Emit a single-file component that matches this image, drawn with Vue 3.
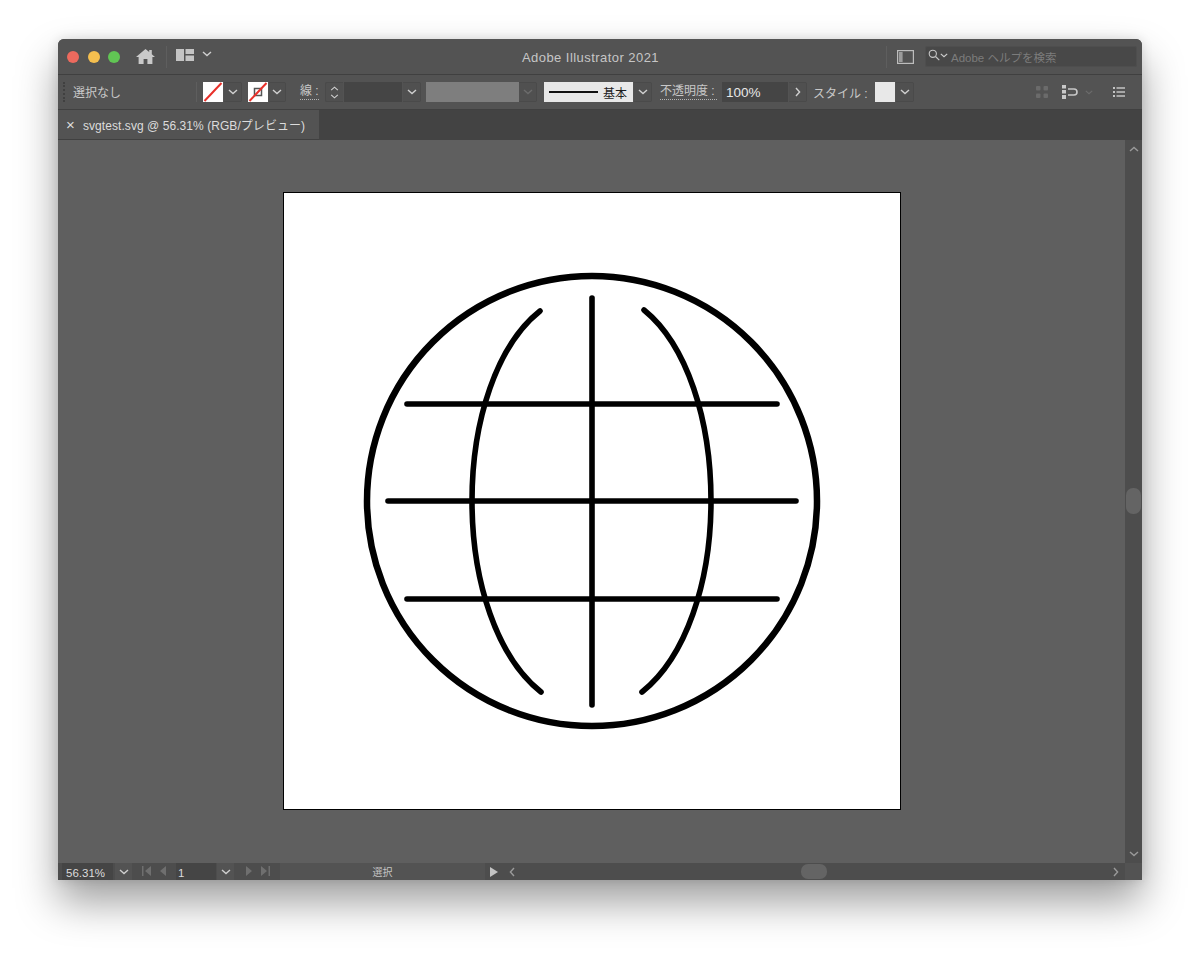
<script setup>
const swatches = [{ id: 'fill' }, { id: 'stroke' }]
</script>

<template>
  <div class="page">
    <svg class="defs" width="0" height="0" aria-hidden="true">
      <symbol id="chev" viewBox="0 0 10 6">
        <path d="M1 1l4 3.6L9 1" fill="none" stroke="currentColor" stroke-width="1.4" />
      </symbol>
    </svg>

    <div class="window">
      <!-- title bar -->
      <header class="titlebar">
        <div class="title-left">
          <span class="light red"></span>
          <span class="light yellow"></span>
          <span class="light green"></span>
          <svg class="home" viewBox="0 0 19 15">
            <path d="M9.5 0L0 8h2.6v7h5V10h3.8v5h5V8H19l-3.2-2.7V1h-2.6v2.1z" fill="#c9c9c9" />
          </svg>
          <span class="vsep"></span>
          <svg class="layout" viewBox="0 0 18 12">
            <path d="M0 0h8v12H0zM9.5 0H18v5H9.5zM9.5 6.5H18V12H9.5z" fill="#c4c4c4" />
          </svg>
          <svg class="chev chev-layout"><use href="#chev" /></svg>
        </div>
        <div class="app-title">Adobe Illustrator 2021</div>
        <div class="title-right">
          <span class="vsep"></span>
          <svg class="panel-icon" viewBox="0 0 17 14">
            <rect x=".6" y=".6" width="15.8" height="12.8" fill="none" stroke="#bdbdbd" stroke-width="1.2" />
            <rect x="2" y="2" width="3.6" height="10" fill="#9c9c9c" />
          </svg>
          <div class="search">
            <svg class="search-icon" viewBox="0 0 12 12">
              <circle cx="4.8" cy="4.8" r="3.6" fill="none" stroke="#c8c8c8" stroke-width="1.1" />
              <path d="M7.5 7.5l3.8 3.6" stroke="#c8c8c8" stroke-width="1.2" />
            </svg>
            <svg class="chev chev-search"><use href="#chev" /></svg>
            <span class="search-text">Adobe ヘルプを検索</span>
          </div>
        </div>
      </header>

      <!-- control bar -->
      <div class="toolbar">
        <span class="grip"></span>
        <span class="selection">選択なし</span>
        <span class="vsep tool-sep"></span>

        <div v-for="(s, i) in swatches" :key="s.id" class="combo" :class="'combo-' + s.id">
          <svg class="swatch" viewBox="0 0 20 20">
            <rect width="20" height="20" fill="#fff" />
            <rect v-if="i === 1" x="6.500" y="6.500" width="7" height="7" fill="none" stroke="#555" stroke-width="1.500" />
            <path d="M1.500 19L18.500 1" stroke="#e8302a" stroke-width="2" />
          </svg>
          <span class="combo-btn"><svg class="chev"><use href="#chev" /></svg></span>
        </div>

        <span class="label label-stroke">線 :</span>
        <div class="combo combo-weight">
          <span class="stepper">
            <svg class="step up"><use href="#chev" /></svg>
            <svg class="step"><use href="#chev" /></svg>
          </span>
          <span class="field field-weight"></span>
          <span class="combo-btn"><svg class="chev"><use href="#chev" /></svg></span>
        </div>

        <div class="combo combo-gray">
          <span class="gray-box"></span>
          <span class="combo-btn dim"><svg class="chev"><use href="#chev" /></svg></span>
        </div>

        <div class="combo combo-basic">
          <span class="basic-box"><i class="basic-line"></i>基本</span>
          <span class="combo-btn"><svg class="chev"><use href="#chev" /></svg></span>
        </div>

        <span class="label label-opacity">不透明度 :</span>
        <div class="combo combo-opacity">
          <span class="field field-opacity">100%</span>
          <span class="combo-btn">
            <svg class="chev chev-right"><use href="#chev" /></svg>
          </span>
        </div>

        <span class="label-plain">スタイル :</span>
        <div class="combo combo-style">
          <span class="style-box"></span>
          <span class="combo-btn"><svg class="chev"><use href="#chev" /></svg></span>
        </div>

        <div class="tool-right">
          <svg class="grid-icon" viewBox="0 0 12 12">
            <rect width="4.500" height="4.500" rx="1" fill="#6b6b6b" />
            <rect x="7.500" width="4.500" height="4.500" rx="1" fill="#6b6b6b" />
            <rect y="7.500" width="4.500" height="4.500" rx="1" fill="#6b6b6b" />
            <rect x="7.500" y="7.500" width="4.500" height="4.500" rx="1" fill="#6b6b6b" />
          </svg>
          <svg class="align-icon" viewBox="0 0 17 14">
            <path d="M0 0h4v3.500H0zM0 5h4v3.500H0zM0 10h4v4H0z" fill="#c8c8c8" />
            <path d="M6 4h6a3 3 0 0 1 0 6H6" fill="none" stroke="#c8c8c8" stroke-width="1.6" />
          </svg>
          <svg class="chev chev-align"><use href="#chev" /></svg>
          <svg class="list-icon" viewBox="0 0 12 10">
            <path d="M0 0h2v2H0zM0 4h2v2H0zM0 8h2v2H0zM3.500 .3H12v1.400H3.500zM3.500 4.300H12v1.400H3.500zM3.500 8.300H12v1.400H3.500z" fill="#c4c4c4" />
          </svg>
        </div>
      </div>

      <!-- document tabs -->
      <div class="tabbar">
        <div class="tab">
          <span class="tab-close">×</span>
          <span class="tab-name">svgtest.svg @ 56.31% (RGB/プレビュー)</span>
        </div>
      </div>

      <!-- canvas + vertical scroll -->
      <div class="workspace">
        <div class="canvas">
          <div class="artboard">
            <svg class="globe" viewBox="283 192 618 618">
              <circle cx="592" cy="501" r="225" fill="none" stroke="#000" stroke-width="6.500" />
              <g fill="none" stroke="#000" stroke-width="5.600" stroke-linecap="round">
                <path d="M592 298V705" />
                <path d="M407 404H777" />
                <path d="M388 501H796" />
                <path d="M407 599H777" />
                <path d="M540 311C497 345 472 420 472 501C472 582 497 657 541 692" />
                <path d="M644 310C687 345 711 420 711 501C711 582 686 657 642 692" />
              </g>
            </svg>
          </div>
        </div>
        <div class="vscroll">
          <svg class="chev sb-up"><use href="#chev" /></svg>
          <span class="vthumb"></span>
          <svg class="chev sb-down"><use href="#chev" /></svg>
        </div>
      </div>

      <!-- status bar -->
      <footer class="statusbar">
        <span class="st-field st-zoom">56.31%</span>
        <span class="st-btn"><svg class="chev"><use href="#chev" /></svg></span>
        <svg class="nav nav-prev" viewBox="0 0 30 10">
          <path d="M2 0h1.500v10H2zM11 0v10L5 5zM26 0v10L20 5z" fill="#6f6f6f" />
        </svg>
        <span class="st-field st-page">1</span>
        <span class="st-btn st-btn-page"><svg class="chev"><use href="#chev" /></svg></span>
        <svg class="nav nav-next" viewBox="0 0 30 10">
          <path d="M4 0v10l6-5zM19 0v10l6-5zM26.500 0H28v10h-1.500z" fill="#6f6f6f" />
        </svg>
        <span class="st-label">選択</span>
        <svg class="play" viewBox="0 0 8 10"><path d="M0 0v10l8-5z" fill="#c4c4c4" /></svg>
        <div class="hscroll">
          <svg class="chev chev-left"><use href="#chev" /></svg>
          <span class="hthumb"></span>
          <svg class="chev chev-right hs-right"><use href="#chev" /></svg>
        </div>
        <span class="corner"></span>
      </footer>
    </div>
  </div>
</template>

<style>
html,
body {
  margin: 0;
  background: #fff;
}
</style>

<style scoped>
.page {
  height: 956px;
  box-sizing: border-box;
  padding: 39px 58px 0;
  overflow: hidden;
  background: #fff;
  font-family: "Liberation Sans", "Noto Sans CJK JP", sans-serif;
}
.defs {
  position: absolute;
}
.window {
  height: 841px;
  display: flex;
  flex-direction: column;
  border-radius: 6px 6px 0 0;
  overflow: hidden;
  background: #535353;
  box-shadow: 0 22px 42px rgba(0, 0, 0, 0.38), 0 0 12px rgba(0, 0, 0, 0.12);
}
.chev {
  width: 10px;
  height: 6px;
  color: #cfcfcf;
  display: block;
  flex: none;
}

/* title bar */
.titlebar {
  height: 35px;
  flex: none;
  display: flex;
  align-items: center;
  background: #535353;
  border-bottom: 1px solid #404040;
}
.title-left {
  width: 237px;
  flex: none;
  display: flex;
  align-items: center;
  padding-left: 9px;
  box-sizing: border-box;
}
.light {
  width: 12px;
  height: 12px;
  border-radius: 50%;
  margin-right: 8.500px;
  flex: none;
}
.red {
  background: #ed6a5e;
}
.yellow {
  background: #f5bf4f;
}
.green {
  background: #61c554;
}
.home {
  width: 19px;
  height: 15px;
  margin-left: 7px;
}
.vsep {
  width: 1px;
  height: 22px;
  background: #5e5e5e;
  flex: none;
}
.title-left .vsep {
  margin-left: 11px;
}
.layout {
  width: 18px;
  height: 12px;
  margin-left: 9px;
  margin-top: -3px;
}
.chev-layout {
  margin-left: 8px;
  margin-top: -6px;
}
.app-title {
  flex: 1;
  text-align: center;
  padding-top: 1px;
  font-size: 13px;
  letter-spacing: 0.45px;
  color: #c6c6c6;
}
.title-right {
  width: 256px;
  flex: none;
  display: flex;
  align-items: center;
}
.panel-icon {
  width: 17px;
  height: 14px;
  margin-left: 10px;
}
.search {
  width: 212px;
  height: 21px;
  margin-left: 11px;
  display: flex;
  align-items: center;
  background: #484848;
  border: 1px solid #4e4e4e;
  border-radius: 2px;
  box-sizing: border-box;
}
.search-icon {
  width: 12px;
  height: 12px;
  margin-left: 2px;
  margin-top: -3px;
}
.chev-search {
  width: 8px;
  height: 5px;
  margin-top: -3px;
}
.search-text {
  margin-left: 3px;
  padding-top: 1px;
  font-size: 11.500px;
  color: #7c7c7c;
  white-space: nowrap;
}

/* control bar */
.toolbar {
  height: 34px;
  flex: none;
  display: flex;
  align-items: center;
  background: #535353;
  border-bottom: 1px solid #404040;
  font-size: 12px;
  color: #c8c8c8;
}
.grip {
  width: 0;
  height: 20px;
  margin-left: 5px;
  border-left: 2px dotted #404040;
}
.selection {
  margin-left: 8px;
  width: 48px;
  margin-top: -2px;
  white-space: nowrap;
}
.tool-sep {
  height: 20px;
  margin-left: 75px;
}
.combo {
  display: flex;
  height: 20px;
  align-items: stretch;
  flex: none;
}
.combo-btn {
  display: flex;
  align-items: center;
  justify-content: center;
  width: 18px;
  margin-left: 1px;
  background: #505050;
  border: 1px solid #4a4a4a;
  border-left: 0;
  border-radius: 0 2px 2px 0;
  box-sizing: border-box;
  flex: none;
}
.combo-btn.dim {
  background: #505050;
}
.combo-btn.dim .chev {
  color: #6c6c6c;
}
.swatch {
  width: 20px;
  height: 20px;
  display: block;
}
.combo-fill {
  margin-left: 6px;
}
.combo-stroke {
  margin-left: 6px;
}
.combo-stroke .combo-btn {
  width: 17px;
}
.label {
  border-bottom: 1px dotted #b5b5b5;
  line-height: 15px;
  white-space: nowrap;
  flex: none;
}
.label-stroke {
  margin-left: 14px;
  width: 19px;
}
.combo-weight {
  margin-left: 6px;
}
.stepper {
  width: 18px;
  display: flex;
  flex-direction: column;
  align-items: center;
  justify-content: center;
  gap: 3px;
  background: #505050;
  border: 1px solid #4a4a4a;
  border-right: 0;
  border-radius: 2px 0 0 2px;
  box-sizing: border-box;
}
.step {
  width: 9px;
  height: 5px;
  color: #cfcfcf;
  display: block;
}
.step.up {
  transform: rotate(180deg);
}
.field {
  background: #454545;
  color: #e8e8e8;
}
.field-weight {
  width: 58px;
  margin-left: 1px;
}
.combo-gray {
  margin-left: 5px;
}
.gray-box {
  width: 93px;
  background: #7e7e7e;
}
.combo-gray .combo-btn {
  margin-left: 0;
}
.combo-basic {
  margin-left: 7px;
}
.basic-box {
  width: 89px;
  box-sizing: border-box;
  padding-left: 5px;
  background: #e8e8e8;
  color: #1c1c1c;
  display: flex;
  align-items: center;
  gap: 5px;
  white-space: nowrap;
}
.basic-line {
  width: 49px;
  height: 2px;
  background: #111;
  flex: none;
}
.label-opacity {
  margin-left: 8px;
  width: 57px;
}
.combo-opacity {
  margin-left: 5px;
}
.field-opacity {
  width: 66px;
  box-sizing: border-box;
  padding-left: 4px;
  font-size: 13.500px;
  line-height: 21px;
}
.chev-right {
  transform: rotate(-90deg);
}
.label-plain {
  margin-left: 6px;
  width: 55px;
  white-space: nowrap;
  flex: none;
}
.combo-style {
  margin-left: 7px;
}
.style-box {
  width: 20px;
  background: #e8e8e8;
}
.tool-right {
  margin-left: 122px;
  display: flex;
  align-items: center;
}
.grid-icon {
  width: 12px;
  height: 12px;
}
.align-icon {
  width: 17px;
  height: 14px;
  margin-left: 14px;
}
.chev-align {
  width: 8px;
  height: 5px;
  margin-left: 6px;
  color: #6c6c6c;
}
.list-icon {
  width: 12px;
  height: 10px;
  margin-left: 20px;
}

/* tabs */
.tabbar {
  height: 30px;
  flex: none;
  display: flex;
  background: #434343;
}
.tab {
  width: 261px;
  display: flex;
  align-items: center;
  background: #535353;
  border-bottom: 1px solid #404040;
  box-sizing: border-box;
  font-size: 12px;
  letter-spacing: 0.06px;
  color: #dcdcdc;
  white-space: nowrap;
}
.tab-close {
  width: 25px;
  padding-left: 8px;
  box-sizing: border-box;
  font-size: 15px;
  flex: none;
}

/* canvas */
.workspace {
  flex: 1;
  min-height: 0;
  display: flex;
}
.canvas {
  flex: 1;
  display: flex;
  align-items: center;
  justify-content: center;
  background: #5f5f5f;
}
.artboard {
  width: 618px;
  height: 618px;
  flex: none;
  margin-top: -1px;
  box-sizing: border-box;
  background: #fff;
  outline: 1px solid #000;
  outline-offset: -1px;
}
.globe {
  display: block;
  width: 618px;
  height: 618px;
}
.vscroll {
  width: 17px;
  flex: none;
  display: flex;
  flex-direction: column;
  align-items: center;
  background: #4d4d4d;
}
.sb-up {
  transform: rotate(180deg);
  margin-top: 6px;
  color: #9a9a9a;
}
.vthumb {
  width: 15px;
  height: 26px;
  margin-top: 336px;
  border-radius: 7px;
  background: #646464;
}
.sb-down {
  margin-top: auto;
  margin-bottom: 6px;
  color: #9a9a9a;
}

/* status bar */
.statusbar {
  height: 17px;
  flex: none;
  display: flex;
  align-items: stretch;
  background: #4d4d4d;
  font-size: 11.500px;
  color: #dcdcdc;
  overflow: hidden;
}
.st-field {
  background: #454545;
  line-height: 20px;
  height: 17px;
  flex: none;
  white-space: nowrap;
}
.st-zoom {
  width: 51px;
  margin-left: 4px;
  padding-left: 4px;
  box-sizing: border-box;
}
.st-btn {
  width: 17px;
  margin-left: 2px;
  display: flex;
  align-items: center;
  justify-content: center;
  background: #535353;
  flex: none;
}
.nav {
  width: 30px;
  height: 10px;
  align-self: center;
  flex: none;
  margin-top: -2px;
}
.nav-prev {
  margin-left: 8px;
}
.st-page {
  width: 40px;
  margin-left: 6px;
  padding-left: 2px;
  box-sizing: border-box;
}
.st-btn-page {
  margin-left: 1px;
}
.nav-next {
  margin-left: 8px;
}
.st-label {
  width: 205px;
  margin-left: 8px;
  background: #535353;
  text-align: center;
  font-size: 10px;
  line-height: 19px;
  color: #c4c4c4;
  flex: none;
}
.play {
  width: 8px;
  height: 10px;
  align-self: center;
  margin-left: 5px;
  flex: none;
}
.hscroll {
  flex: 1;
  display: flex;
  align-items: center;
  background: #4d4d4d;
  margin-left: 4px;
}
.chev-left {
  transform: rotate(90deg);
  margin-left: 5px;
  color: #9a9a9a;
}
.hthumb {
  width: 26px;
  height: 15px;
  margin-left: 284px;
  border-radius: 7px;
  background: #646464;
}
.hs-right {
  margin-left: auto;
  margin-right: 4px;
  color: #9a9a9a;
}
.corner {
  width: 17px;
  flex: none;
  background: #535353;
}
</style>
